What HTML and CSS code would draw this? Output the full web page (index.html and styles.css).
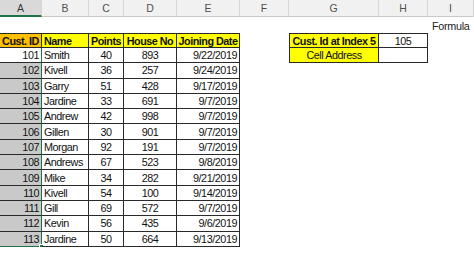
FILE: index.html
```html
<!DOCTYPE html>
<html>
<head>
<meta charset="utf-8">
<link rel="stylesheet" href="styles.css">
</head>
<body>
<div class="sheet">
  <div class="h sel">A</div><div class="h">B</div><div class="h">C</div><div class="h">D</div><div class="h">E</div><div class="h">F</div><div class="h">G</div><div class="h">H</div><div class="h">I</div>

  <div class="c"></div><div class="c"></div><div class="c"></div><div class="c"></div><div class="c"></div><div class="c"></div><div class="c"></div><div class="c"></div><div class="c note">Formula</div>

  <div class="t top or b ctr">Cust. ID</div><div class="t top hd b">Name</div><div class="t top hd b ctr">Points</div><div class="t top hd b ctr">House No</div><div class="t top hd b ctr">Joining Date</div><div class="c"></div><div class="t top lft hd b ctr">Cust. Id at Index 5</div><div class="t top ctr">105</div><div class="c"></div>

  <div class="t num gs act">101</div><div class="t">Smith</div><div class="t ctr">40</div><div class="t ctr">893</div><div class="t num">9/22/2019</div><div class="c"></div><div class="t lft hd ctr">Cell Address</div><div class="t"></div><div class="c"></div>

  <div class="t num gs grey">102</div><div class="t">Kivell</div><div class="t ctr">36</div><div class="t ctr">257</div><div class="t num">9/24/2019</div><div class="c"></div><div class="c"></div><div class="c"></div><div class="c"></div>

  <div class="t num gs grey">103</div><div class="t">Garry</div><div class="t ctr">51</div><div class="t ctr">428</div><div class="t num">9/17/2019</div><div class="c"></div><div class="c"></div><div class="c"></div><div class="c"></div>

  <div class="t num gs grey">104</div><div class="t">Jardine</div><div class="t ctr">33</div><div class="t ctr">691</div><div class="t num">9/7/2019</div><div class="c"></div><div class="c"></div><div class="c"></div><div class="c"></div>

  <div class="t num gs grey">105</div><div class="t">Andrew</div><div class="t ctr">42</div><div class="t ctr">998</div><div class="t num">9/7/2019</div><div class="c"></div><div class="c"></div><div class="c"></div><div class="c"></div>

  <div class="t num gs grey">106</div><div class="t">Gillen</div><div class="t ctr">30</div><div class="t ctr">901</div><div class="t num">9/7/2019</div><div class="c"></div><div class="c"></div><div class="c"></div><div class="c"></div>

  <div class="t num gs grey">107</div><div class="t">Morgan</div><div class="t ctr">92</div><div class="t ctr">191</div><div class="t num">9/7/2019</div><div class="c"></div><div class="c"></div><div class="c"></div><div class="c"></div>

  <div class="t num gs grey">108</div><div class="t">Andrews</div><div class="t ctr">67</div><div class="t ctr">523</div><div class="t num">9/8/2019</div><div class="c"></div><div class="c"></div><div class="c"></div><div class="c"></div>

  <div class="t num gs grey">109</div><div class="t">Mike</div><div class="t ctr">34</div><div class="t ctr">282</div><div class="t num">9/21/2019</div><div class="c"></div><div class="c"></div><div class="c"></div><div class="c"></div>

  <div class="t num gs grey">110</div><div class="t">Kivell</div><div class="t ctr">54</div><div class="t ctr">100</div><div class="t num">9/14/2019</div><div class="c"></div><div class="c"></div><div class="c"></div><div class="c"></div>

  <div class="t num gs grey">111</div><div class="t">Gill</div><div class="t ctr">69</div><div class="t ctr">572</div><div class="t num">9/7/2019</div><div class="c"></div><div class="c"></div><div class="c"></div><div class="c"></div>

  <div class="t num gs grey">112</div><div class="t">Kevin</div><div class="t ctr">56</div><div class="t ctr">435</div><div class="t num">9/6/2019</div><div class="c"></div><div class="c"></div><div class="c"></div><div class="c"></div>

  <div class="t num gs grey last">113<span class="handle"></span></div><div class="t">Jardine</div><div class="t ctr">50</div><div class="t ctr">664</div><div class="t num">9/13/2019</div><div class="c"></div><div class="c"></div><div class="c"></div><div class="c"></div>
</div>
</body>
</html>
```
FILE: styles.css
```css
html, body {
  margin: 0;
  padding: 0;
  background: #ffffff;
}
.sheet {
  display: grid;
  grid-template-columns: 42px 47px 35px 53px 63px 49px 90px 49px 46px;
  grid-template-rows: 17px 16px 15px repeat(13, 15.3px);
  font-family: "Liberation Sans", Arial, sans-serif;
  font-size: 10.8px;
  letter-spacing: -0.45px;
  color: #111;
  width: 474px;
}
.sheet > div {
  box-sizing: border-box;
  display: flex;
  align-items: center;
  padding: 0 2px;
  white-space: nowrap;
  overflow: visible;
  position: relative;
}
.h {
  background: #f1f1f1;
  border-right: 1px solid #d6d6d6;
  border-bottom: 1px solid #c8c8c8;
  justify-content: center;
  color: #505050;
  font-size: 10.5px;
  letter-spacing: 0;
}
.h.sel {
  background: #d9d9d9;
  border-bottom: 2px solid #217346;
  color: #3a3a3a;
}
.sheet > .note {
  font-size: 10.8px;
  letter-spacing: -0.3px;
  padding: 0 0 1px 4px;
  align-items: flex-end;
  color: #222;
}
.t {
  border-right: 1px solid #2a2a2a;
  border-bottom: 1px solid #2a2a2a;
}
.t.top { border-top: 1px solid #2a2a2a; }
.t.lft { border-left: 1px solid #2a2a2a; }
.b { font-weight: bold; letter-spacing: -0.5px; }
.hd { background: #ffff00; }
.or { background: #ffc000; }
.ctr { justify-content: center; }
.num { justify-content: flex-end; }
.gs { border-right: 1px solid #217346; }
.grey { background: #c9c9c9; }
.last { border-bottom: 1px solid #217346; }
.handle {
  position: absolute;
  right: -3px;
  bottom: -3px;
  width: 5px;
  height: 5px;
  background: #217346;
  border: 1px solid #ffffff;
  box-sizing: border-box;
}
```
